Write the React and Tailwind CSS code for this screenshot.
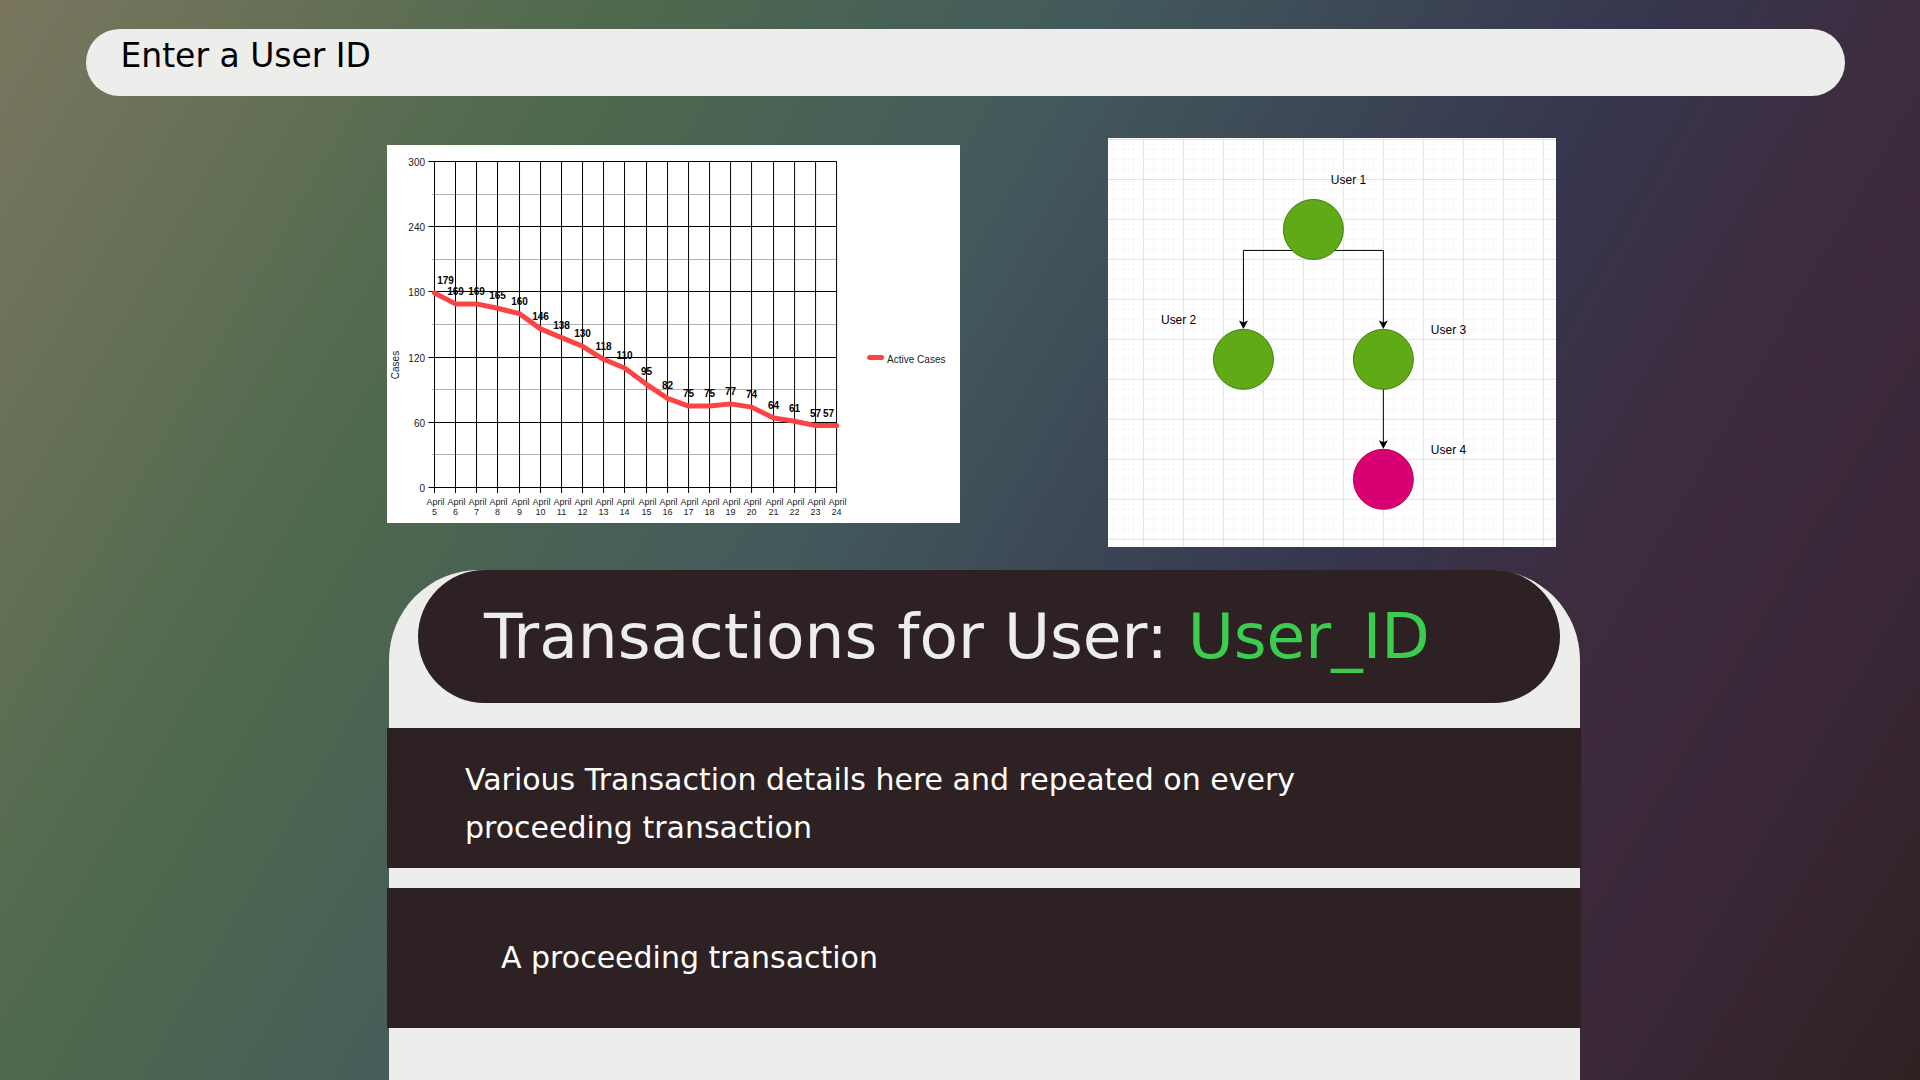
const cases = [
  179, 169, 169, 165, 160, 146, 138, 130, 118, 110, 95, 82, 75, 75, 77, 74, 64, 61, 57, 57,
];

const LEFT = 47.5;
const RIGHT = 449.5;
const TOP = 16.5;
const BOTTOM = 342.5;

const xAt = (i) => Math.round(LEFT + ((RIGHT - LEFT) * i) / (cases.length - 1) - 0.5) + 0.5;
const yAt = (v) => BOTTOM - ((BOTTOM - TOP) * v) / 300;
const snap = (n) => Math.floor(n) + 0.5;

function labelShift(i) {
  if (i === 0) return 11;
  if (i === cases.length - 1) return -8;
  return 0;
}

function CasesChart() {
  return (
    <svg
      viewBox="0 0 573 378"
      role="img"
      aria-label="Active cases by day"
      className="mt-[7px] block h-auto w-[48%] bg-white font-['Liberation_Sans',Arial,sans-serif]"
    >
      {[30, 90, 150, 210, 270].map((v) => (
        <path key={v} d={`M45 ${snap(yAt(v))}H${RIGHT}`} stroke="#b0b0b0" />
      ))}
      {[0, 60, 120, 180, 240, 300].map((v) => (
        <g key={v}>
          <path d={`M41.5 ${snap(yAt(v))}H${RIGHT}`} stroke="#000" />
          <text x="38" y={snap(yAt(v)) + 4} textAnchor="end" fontSize="10" fill="#222">
            {v}
          </text>
        </g>
      ))}
      {cases.map((_, i) => (
        <g key={i} textAnchor="middle" fontSize="9" fill="#222">
          <path d={`M${xAt(i)} ${TOP}V348`} stroke="#000" />
          <text x={xAt(i) + 1} y="360">April</text>
          <text x={xAt(i)} y="370">{i + 5}</text>
        </g>
      ))}
      <polyline
        points={cases.map((v, i) => `${xAt(i)},${yAt(v)}`).join(" ")}
        fill="none"
        stroke="#fb4444"
        strokeWidth="5"
        strokeLinecap="round"
        strokeLinejoin="round"
      />
      {cases.map((v, i) => (
        <text
          key={i}
          x={xAt(i) + labelShift(i)}
          y={yAt(v) - 9}
          textAnchor="middle"
          fontSize="10"
          fontWeight="700"
        >
          {v}
        </text>
      ))}
      <text transform="translate(12 220) rotate(-90)" textAnchor="middle" fontSize="10" fill="#222">
        Cases
      </text>
      <path d="M482.500 212.500H494.500" stroke="#fb4444" strokeWidth="5" strokeLinecap="round" />
      <text x="500" y="218" fontSize="10" fill="#222">Active Cases</text>
    </svg>
  );
}

const nodes = [
  { name: "User 1", cx: 205.5, cy: 91.5, tx: 223, ty: 46 },
  { name: "User 2", cx: 135.5, cy: 221.5, tx: 53, ty: 186 },
  { name: "User 3", cx: 275.5, cy: 221.5, tx: 323, ty: 196 },
  { name: "User 4", cx: 275.5, cy: 341.5, tx: 323, ty: 316, flagged: true },
];

const arrows = [
  [135.5, 191],
  [275.5, 191],
  [275.5, 311],
];

function UserTree() {
  return (
    <svg
      viewBox="0 0 448 409"
      role="img"
      aria-label="User relationships"
      className="mr-[2.1%] block h-auto w-[37.5%] bg-white font-['Liberation_Sans',Arial,sans-serif]"
    >
      {Array.from({ length: 45 }, (_, i) => (
        <path key={i} d={`M${i * 10 + 5.5} 0V409`} stroke={i % 4 === 3 ? "#e2e2e2" : "#f8f8f8"} />
      ))}
      {Array.from({ length: 41 }, (_, i) => (
        <path key={i} d={`M0 ${i * 10 + 1.5}H448`} stroke={i % 4 === 0 ? "#e2e2e2" : "#f8f8f8"} />
      ))}
      <path
        d="M205.500 112.500H135.500V186M205.500 112.500H275.500V186M275.500 251V306"
        fill="none"
        stroke="#000"
      />
      {arrows.map(([x, y]) => (
        <path key={`${x}-${y}`} d={`M${x} ${y}l-4.500-8.500 4.500 2 4.500-2z`} fill="#000" />
      ))}
      {nodes.map((n) => (
        <g key={n.name}>
          <circle
            cx={n.cx}
            cy={n.cy}
            r="30"
            fill={n.flagged ? "#d80073" : "#60a917"}
            stroke={n.flagged ? "#b5005f" : "#3f8010"}
          />
          <text x={n.tx} y={n.ty} fontSize="12">{n.name}</text>
        </g>
      ))}
    </svg>
  );
}

export default function App() {
  return (
    <div className="flex min-h-screen flex-col bg-[linear-gradient(120deg,#7a765e_0%,#4e694d_25%,#435a5c_43%,#36364f_65%,#3d2c3e_76%,#3a2839_87%,#2f2122_100%)] font-['DejaVu_Sans',Verdana,sans-serif]">
      <header className="mr-[3.900%] ml-[4.500%] pt-[29px]">
        <input
          type="text"
          aria-label="Enter a User ID"
          placeholder="Enter a User ID"
          className="block h-[67px] w-full rounded-full bg-[#ededeb] px-[34px] pb-3.5 text-[33px] text-black outline-none placeholder:text-black"
        />
      </header>

      <main className="grid flex-1 grid-cols-[387fr_1194fr_339fr] pt-[42px]">
        <div className="col-start-2 flex min-w-0 flex-col">
          <div className="flex items-start justify-between">
            <CasesChart />
            <UserTree />
          </div>

          <section className="mt-[23px] mr-px ml-0.5 flex-1 rounded-t-[90px] bg-[#ededeb] pb-13">
            <div className="mr-5 ml-[29px] flex min-h-[133px] items-center rounded-full bg-[#2d2123] px-[66px] pt-0.5">
              <h1 className="text-[63px] leading-[80px] text-[#ededeb]">
                Transactions for User: <span className="text-[#3bcd50]">User_ID</span>
              </h1>
            </div>
            <ul className="mt-[25px] -mr-px -ml-0.5 flex flex-col gap-5 text-[30px] leading-[48px] text-white">
              <li className="flex min-h-[140px] items-center bg-[#2d2123] px-[78px] pt-3">
                <p className="max-w-[900px]">
                  Various Transaction details here and repeated on every proceeding transaction
                </p>
              </li>
              <li className="flex min-h-[140px] items-center bg-[#2d2123] px-[114px]">
                <p>A proceeding transaction</p>
              </li>
            </ul>
          </section>
        </div>
      </main>
    </div>
  );
}
